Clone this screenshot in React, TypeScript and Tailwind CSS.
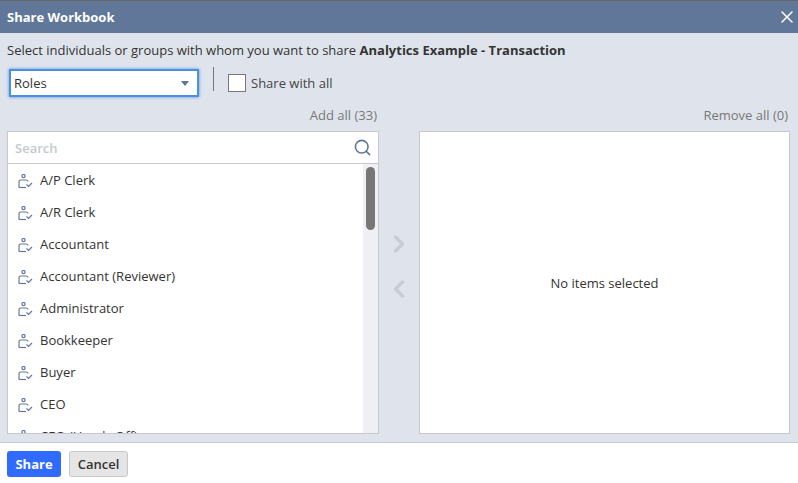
import { ChevronLeft, ChevronRight, Search, X } from 'lucide-react'

const roles = [
  'A/P Clerk',
  'A/R Clerk',
  'Accountant',
  'Accountant (Reviewer)',
  'Administrator',
  'Bookkeeper',
  'Buyer',
  'CEO',
  'CEO (Hands Off)',
]

function RoleIcon() {
  return (
    <svg width="15" height="15" viewBox="0 0 15 15" fill="none" stroke="#66779a" strokeWidth="1.2" className="shrink-0">
      <circle cx="5.5" cy="2" r="1.6" />
      <path d="M1 13.5V7.5q0-1.5 1.5-1.5h5.5q1.5 0 2 1.5" />
      <path d="M1 13.5h7" />
      <path d="M8.5 10.5l2 2 3.5-3.5" />
    </svg>
  )
}

export default function App() {
  return (
    <div className="w-[798px] h-[483px] flex flex-col overflow-hidden bg-white text-[13px] text-[#333] font-['Open_Sans',sans-serif]">
      <header className="h-[33px] shrink-0 flex items-center justify-between pl-[7px] pr-[1px] bg-[#607799] border-t border-[#666] text-white">
        <span className="font-bold text-[13px] pt-[1px]">Share Workbook</span>
        <X className="w-[20px] h-[20px]" strokeWidth={1.75} />
      </header>

      <div className="h-[410px] shrink-0 flex flex-col bg-[#dfe4ec] border-b border-[#c5cbd6] px-[7px]">
        <p className="mt-[8px] h-[18px] leading-[18px] whitespace-nowrap">
          Select individuals or groups with whom you want to share <b>Analytics Example - Transaction</b>
        </p>

        <div className="mt-[10px] flex items-center pl-[2px]">
          <div className="w-[190px] h-[28px] flex items-center justify-between pl-[3px] pr-[8px] bg-white border-2 border-[#4d90e0] shadow-[0_0_3px_#4d90e0]">
            <span className="pt-[1px]">Roles</span>
            <span className="w-0 h-0 border-x-[4px] border-x-transparent border-t-[5px] border-t-[#5f7596]" />
          </div>
          <div className="ml-[14px] -mt-[2px] self-start w-px h-[24px] bg-[#777]" />
          <div className="ml-[14px] w-[18px] h-[18px] bg-white border border-[#777]" />
          <span className="ml-[5px] pt-[1px] text-[#444]">Share with all</span>
        </div>

        <div className="mt-[9px] flex gap-[40px] flex-1 min-h-0 pb-[8px]">
          <div className="w-[372px] flex flex-col">
            <div className="h-[18px] leading-[18px] text-right text-[#777] pr-[2px]">Add all (33)</div>
            <div className="mt-[7px] flex-1 min-h-0 flex flex-col bg-white border border-[#c8c8c8]">
              <div className="h-[32px] shrink-0 flex items-center justify-between pl-[7px] pr-[6px] border-b border-[#c8c8c8]">
                <span className="pt-[2px] font-semibold text-[#c4c8ce]">Search</span>
                <Search className="w-[19px] h-[19px] text-[#5f7596]" strokeWidth={2} />
              </div>
              <div className="flex-1 min-h-0 flex overflow-hidden">
                <ul className="flex-1 overflow-hidden pt-[1px]">
                  {roles.map((role) => (
                    <li key={role} className="h-[32px] flex items-center pl-[10px] gap-[7px] whitespace-nowrap">
                      <RoleIcon />
                      {role}
                    </li>
                  ))}
                </ul>
                <div className="w-[15px] shrink-0 bg-[#eef0f4] pt-[3px] pl-[3px]">
                  <div className="w-[9px] h-[63px] rounded-full bg-[#777]" />
                </div>
              </div>
            </div>
          </div>

          <div className="w-[371px] flex flex-col relative">
            <div className="h-[18px] leading-[18px] text-right text-[#777] pr-[2px]">Remove all (0)</div>
            <div className="mt-[7px] flex-1 min-h-0 flex items-center justify-center bg-white border border-[#c8c8c8]">
              <span className="pt-[3px]">No items selected</span>
            </div>
            {/* move arrows sit in the gap between the two lists */}
            <div className="absolute -left-[40px] top-[124px] w-[40px] flex flex-col items-center gap-[17px] text-[#c9ccd1]">
              <ChevronRight className="w-[28px] h-[28px]" strokeWidth={3} />
              <ChevronLeft className="w-[28px] h-[28px]" strokeWidth={3} />
            </div>
          </div>
        </div>
      </div>

      <footer className="flex-1 flex items-center gap-[8px] pl-[7px] pt-[2px]">
        <button className="w-[54px] h-[26px] pt-[1px] rounded-[3px] bg-[#2f6bff] text-white font-bold">Share</button>
        <button className="w-[59px] h-[26px] pt-[1px] rounded-[3px] bg-[#e5e5e5] border border-[#c8c8c8] font-semibold text-[#333]">Cancel</button>
      </footer>
    </div>
  )
}
